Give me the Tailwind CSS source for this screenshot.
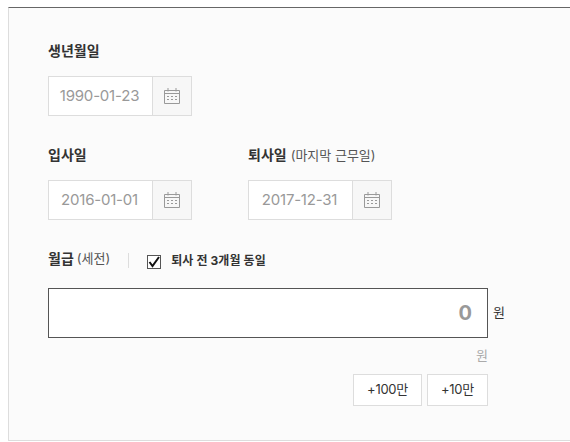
<!DOCTYPE html>
<html lang="ko">
<head>
<meta charset="utf-8">
<script src="https://cdn.jsdelivr.net/npm/@tailwindcss/browser@4"></script>
</head>
<body class="bg-white overflow-hidden font-['Inter','Noto_Sans_CJK_KR',sans-serif]">
<svg class="hidden">
  <symbol id="cal" viewBox="0 0 16 16" fill="none" stroke="#999" stroke-width="1">
    <path d="M.5 2.500h15v13H.5zM.5 5.500h15M4 0v3.500M12 0v3.500"/>
    <path d="M3 8.500h2M7 8.500h2M11 8.500h2M3 11.500h2M7 11.500h2M11 11.500h2"/>
  </symbol>
</svg>
<div class="ml-2 mt-[7px] w-[562px] h-[434px] border-t border-t-[#666] border-l border-b border-l-[#ddd] border-b-[#ddd] bg-[#fbfbfb] pl-[39px] pt-[34px]">
  <div class="h-[18px] flex items-center text-sm font-bold leading-[18px] text-[#333]">생년월일</div>
  <div class="mt-4 flex w-[144px] h-10 border border-[#ddd]">
    <div class="w-[104px] bg-white flex items-center justify-center pr-[2px] text-[15px] tracking-[-0.2px] text-[#999] border-r border-[#ddd]">1990-01-23</div>
    <div class="flex-1 bg-[#f7f7f7] flex items-center justify-center"><svg class="w-4 h-4"><use href="#cal"/></svg></div>
  </div>
  <div class="mt-[30px] flex gap-14">
    <div class="w-[144px]">
      <div class="h-[18px] flex items-center text-sm font-bold text-[#333]">입사일</div>
      <div class="mt-4 flex w-[144px] h-10 border border-[#ddd]">
        <div class="w-[104px] bg-white flex items-center justify-center pr-[2px] text-[15px] tracking-[-0.2px] text-[#999] border-r border-[#ddd]">2016-01-01</div>
        <div class="flex-1 bg-[#f7f7f7] flex items-center justify-center"><svg class="w-4 h-4"><use href="#cal"/></svg></div>
      </div>
    </div>
    <div class="w-[144px]">
      <div class="h-[18px] flex items-center whitespace-nowrap text-sm font-bold text-[#333]">퇴사일<span class="ml-1 text-[13px] font-normal text-[#555]">(마지막 근무일)</span></div>
      <div class="mt-4 flex w-[144px] h-10 border border-[#ddd]">
        <div class="w-[104px] bg-white flex items-center justify-center pr-[2px] text-[15px] tracking-[-0.2px] text-[#999] border-r border-[#ddd]">2017-12-31</div>
        <div class="flex-1 bg-[#f7f7f7] flex items-center justify-center"><svg class="w-4 h-4"><use href="#cal"/></svg></div>
      </div>
    </div>
  </div>
  <div class="mt-[29px] h-5 flex items-center">
    <span class="text-sm font-bold text-[#333]">월급</span>
    <span class="ml-[3px] text-[13px] text-[#555]">(세전)</span>
    <span class="ml-[18px] w-px h-[15px] mt-[3px] bg-[#ddd]"></span>
    <span class="ml-[18px] mt-[5px] w-[14px] h-[14px] border border-[#555] bg-white flex items-center justify-center">
      <svg class="w-3 h-3" viewBox="0 0 12 12" fill="none" stroke="#111" stroke-width="2"><path d="M1.500 6 4.500 10 11 1"/></svg>
    </span>
    <span class="ml-[10px] mt-[3px] text-xs tracking-[0.1px] font-bold text-[#333]">퇴사 전 3개월 동일</span>
  </div>
  <div class="mt-[19px] flex items-center">
    <div class="w-[440px] h-[50px] border border-[#555] bg-white flex items-center justify-end pr-[15px] text-xl font-bold text-[#999]">0</div>
    <span class="ml-[5px] text-[13px] text-[#333]">원</span>
  </div>
  <div class="w-[440px] mt-[10px] h-4 flex items-center justify-end text-[13px] text-[#aaa]">원</div>
  <div class="w-[440px] mt-[10px] flex justify-end gap-[5px]">
    <div class="w-[69px] h-8 border border-[#ddd] bg-white flex items-center justify-center text-[13px] tracking-[-0.3px] text-[#333]">+100만</div>
    <div class="w-[61px] h-8 border border-[#ddd] bg-white flex items-center justify-center text-[13px] tracking-[-0.3px] text-[#333]">+10만</div>
  </div>
</div>
</body>
</html>
